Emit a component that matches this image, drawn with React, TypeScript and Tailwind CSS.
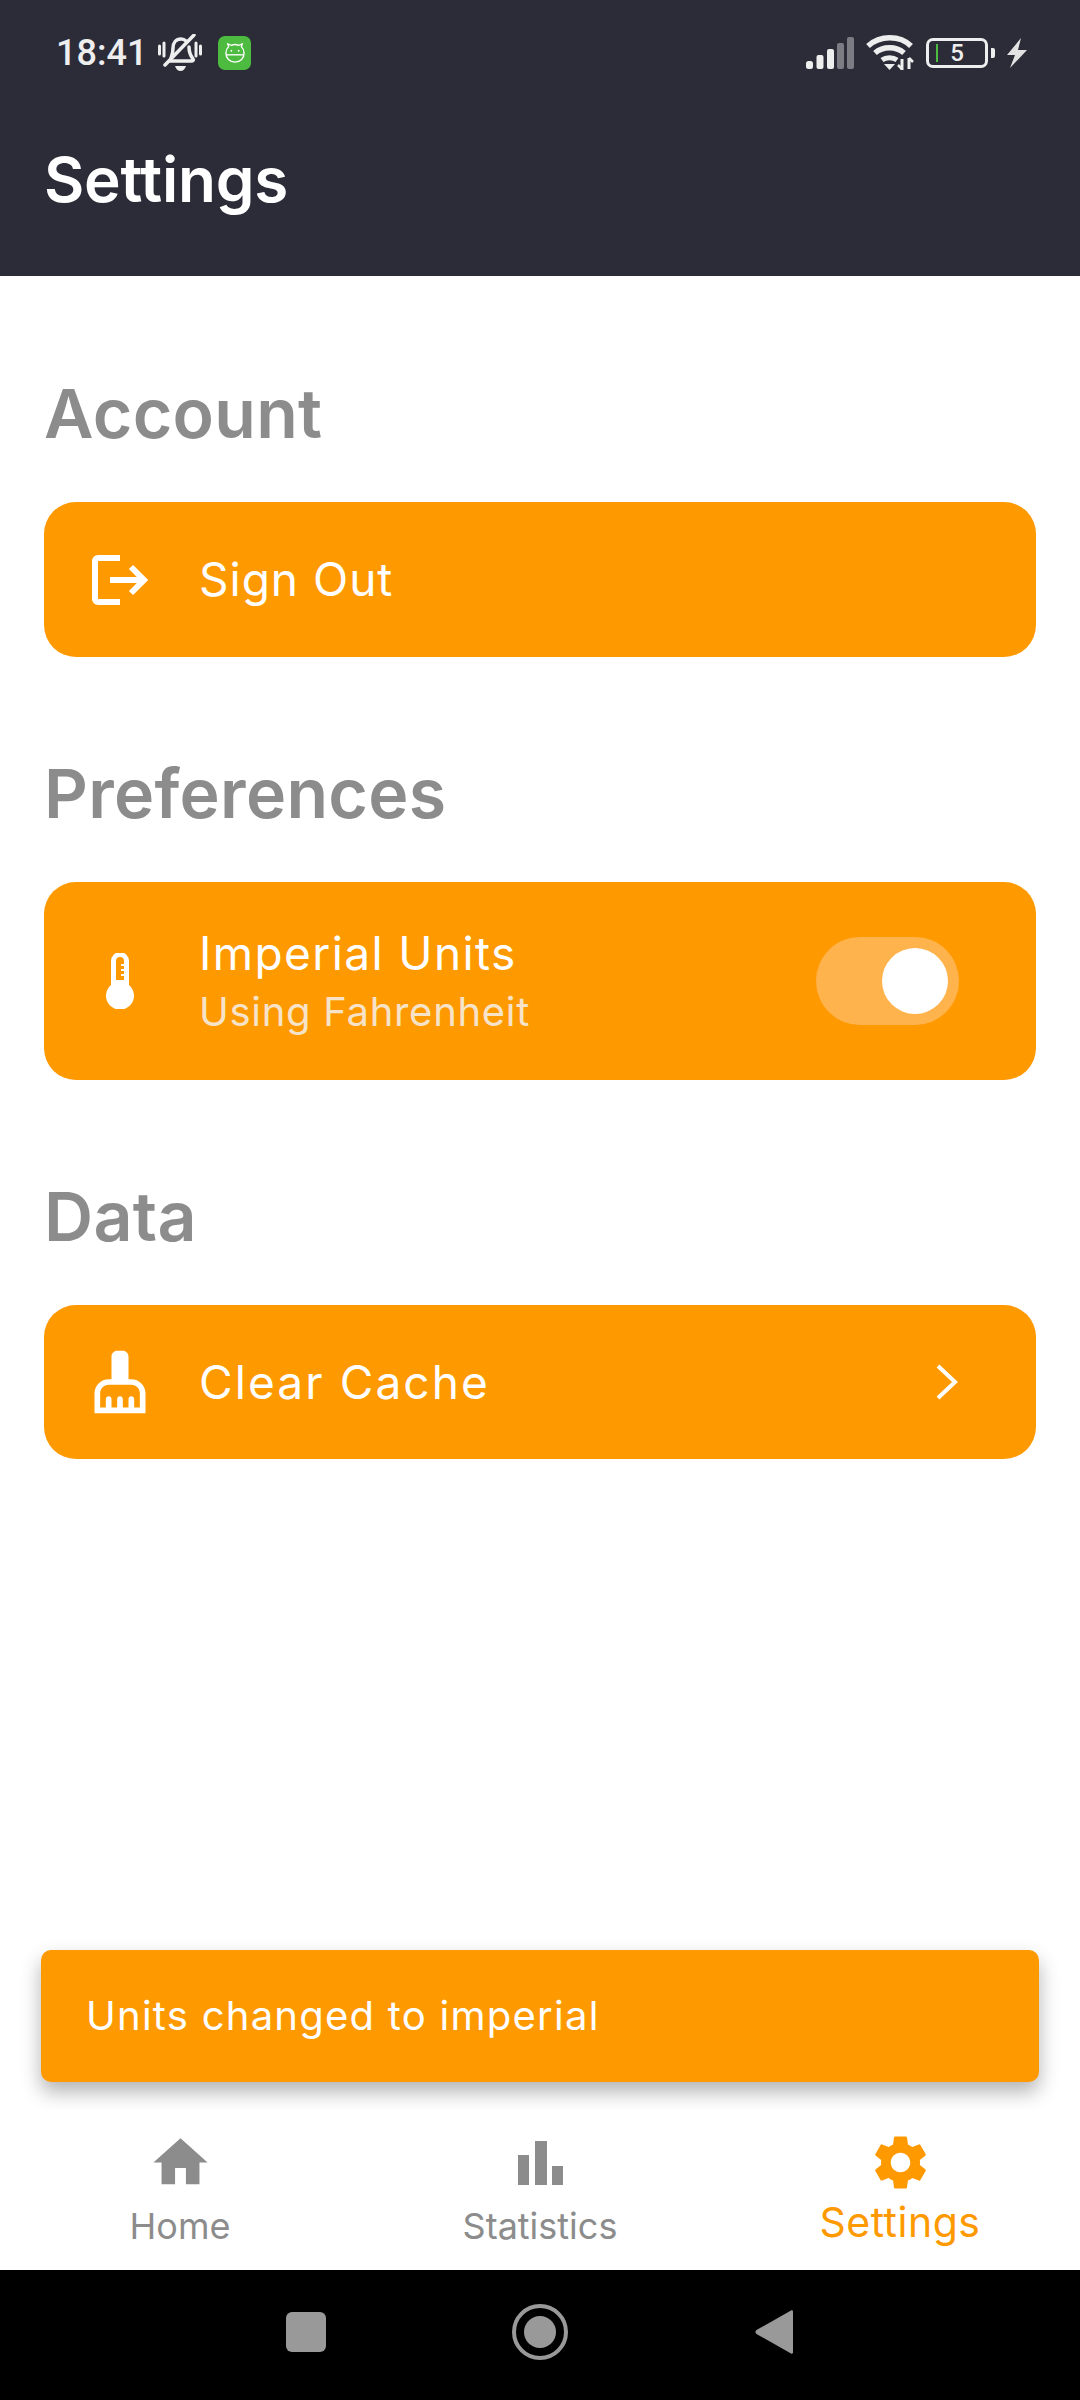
import { MdCleaningServices, MdHome, MdSettings } from 'react-icons/md';

const FONT = 'font-[Inter,"Noto_Sans",sans-serif]';

const MutedBell = () => (
  <svg width="46" height="38" viewBox="0 0 44 38" fill="none" stroke="#eeeeee" strokeLinecap="round">
    <path d="M1.500 12v8M6 9v13M38 9v13M42.500 12v8" strokeWidth="3" />
    <path d="M13 24c1-3 2-5 2-10 0-5 3-9 8-9 2 0 4 1 5 2M31 13c0 5 1 8 4 12 1 1 0 2-1 2H12" strokeWidth="3.500" />
    <path d="M36 1 7 31" strokeWidth="3.500" />
    <path d="M17 32h11c-1 3-3 5-5.500 5S18 35 17 32z" fill="#eeeeee" stroke="none" />
  </svg>
);

const AppBadge = () => (
  <div className="flex h-[34px] w-[33px] items-center justify-center rounded-[7px] bg-[#4dbb3f]">
    <svg width="20" height="22" viewBox="0 0 22 24" fill="none" stroke="#ffffff" strokeWidth="1.500">
      <path d="M4 5 3 2l4 1.500c2.500-1 5.500-1 8 0L19 2l-1 3c2 2 3 4 3 7 0 6-4 10-10 10S1 18 1 12c0-3 1-5 3-7z" />
      <path d="M1.500 14h19" />
      <circle cx="7" cy="9.500" r="1" fill="#ffffff" stroke="none" />
      <circle cx="15" cy="9.500" r="1" fill="#ffffff" stroke="none" />
    </svg>
  </div>
);

const SignalBars = () => (
  <svg width="48" height="32" viewBox="0 0 48 32">
    <rect x="0" y="24" width="7" height="8" rx="2.500" fill="#eeeeee" />
    <rect x="10.500" y="18" width="7" height="14" rx="2" fill="#eeeeee" />
    <rect x="21" y="12" width="7" height="20" rx="2" fill="#eeeeee" />
    <rect x="31" y="6" width="7" height="26" rx="2" fill="#7c7c85" />
    <rect x="41" y="0" width="7" height="32" rx="2" fill="#7c7c85" />
  </svg>
);

const WifiIcon = () => (
  <svg width="48" height="36" viewBox="0 0 48 36" fill="none" stroke="#eeeeee" strokeWidth="5.500">
    <path d="M2 11c12-11 32-11 43 0" />
    <path d="M9 18c8-7 21-7 29 0" />
    <path d="M16 25c4-3 11-3 15 0" strokeWidth="5" />
    <path d="M18 29h11l-5.500 6z" fill="#eeeeee" stroke="none" />
    <path d="M36 24v11M43 23v11" strokeWidth="3" />
    <path d="M32 30l4 4M47 27l-4-4" strokeWidth="2.500" />
  </svg>
);

const Bolt = () => (
  <svg width="20" height="30" viewBox="0 0 20 30">
    <path d="M14 0 0 17h8L3 30l17-18h-9z" fill="#e2e2e2" />
  </svg>
);

const SignOutIcon = () => (
  <svg width="56" height="50" viewBox="0 0 56 50" fill="none" stroke="#ffffff" strokeWidth="6">
    <path d="M28 3H6a3 3 0 0 0-3 3v38a3 3 0 0 0 3 3h22" />
    <path d="M18 25h34M39 12l13 13-13 13" />
  </svg>
);

const Thermometer = () => (
  <svg width="28" height="56" viewBox="0 0 28 56">
    <path
      fill="#ffffff"
      fillRule="evenodd"
      d="M5 8a9 9 0 0 1 18 0v24a14 14 0 1 1-18 0zM10 8v19h8v-4h-3v-2h3v-3h-3v-2h3v-3h-3v-2h3V8a4 4 0 0 0-8 0z"
    />
  </svg>
);

const Chevron = () => (
  <svg width="22" height="36" viewBox="0 0 22 36" fill="none" stroke="#ffffff" strokeWidth="4">
    <path d="m2 2 17 16L2 34" />
  </svg>
);

const StatsIcon = () => (
  <svg width="65" height="65" viewBox="0 0 65 65" fill="#8c8c8c">
    <rect x="10" y="25" width="11" height="30" />
    <rect x="27" y="11" width="12" height="44" />
    <rect x="44" y="36" width="11" height="19" />
  </svg>
);

const SectionTitle = ({ title, first }: { title: string; first?: boolean }) => (
  <h2
    className={`mb-[39px] flex h-[100px] items-center text-[68px] font-semibold tracking-[0.3px] text-[#8c8c8c] ${first ? '' : 'mt-[86px]'}`}
  >
    {title}
  </h2>
);

export default function App() {
  return (
    <div className={`flex h-[2400px] w-[1080px] flex-col overflow-hidden bg-white ${FONT}`}>
      <header className="h-[276px] shrink-0 bg-[#2c2c38] px-[44px]">
        <div className="flex h-[106px] items-center justify-between pl-[12px] pr-[9px] font-[Roboto,sans-serif]">
          <div className="flex items-center gap-[10px]">
            <span className="text-[36px] font-medium text-[#eeeeee]">18:41</span>
            <MutedBell />
            <span className="ml-[5px]">
              <AppBadge />
            </span>
          </div>
          <div className="flex items-center gap-[12px]">
            <SignalBars />
            <WifiIcon />
            <div className="flex items-center gap-[3px]">
              <div className="flex h-[30px] w-[62px] items-center justify-center rounded-[7px] border-[3px] border-[#eeeeee] text-[24px] font-medium leading-none text-[#eeeeee]">
                <span className="mr-[-2px] h-[18px] w-[2px] -translate-x-[14px] bg-[#4dbb3f]" />
                5
              </div>
              <span className="h-[10px] w-[4px] rounded-r-[2px] bg-[#eeeeee]" />
            </div>
            <Bolt />
          </div>
        </div>
        <h1 className="mt-[38px] text-[62px] font-semibold leading-[72px] tracking-[-0.2px] text-white">Settings</h1>
      </header>

      <main className="relative flex-1 px-[44px] pt-[87px]">
        <SectionTitle title="Account" first />
        <div className="flex h-[155px] items-center rounded-[32px] bg-[#ff9900] pl-[40px] text-white">
          <div className="flex w-[72px] justify-center">
            <SignOutIcon />
          </div>
          <span className="ml-[43px] text-[46px] tracking-[1px]">Sign Out</span>
        </div>

        <SectionTitle title="Preferences" />
        <div className="flex h-[198px] items-center rounded-[32px] bg-[#ff9900] pl-[40px] pr-[77px] text-white">
          <div className="flex w-[72px] justify-center">
            <Thermometer />
          </div>
          <div className="ml-[43px] flex-1">
            <p className="text-[46px] leading-[60px] tracking-[1.4px]">Imperial Units</p>
            <p className="mt-[1px] text-[40px] leading-[56px] tracking-[0.7px] text-[#f6e3c8]">Using Fahrenheit</p>
          </div>
          <div className="flex h-[88px] w-[143px] items-center justify-end rounded-full bg-[#ffb34d] pr-[11px]">
            <span className="h-[66px] w-[66px] rounded-full bg-white" />
          </div>
        </div>

        <SectionTitle title="Data" />
        <div className="flex h-[154px] items-center rounded-[32px] bg-[#ff9900] pl-[40px] pr-[78px] text-white">
          <div className="flex w-[72px] justify-center">
            <MdCleaningServices size={68} />
          </div>
          <span className="ml-[43px] flex-1 text-[46px] tracking-[2.1px]">Clear Cache</span>
          <Chevron />
        </div>

        <div className="absolute bottom-[28px] left-[41px] right-[41px] flex h-[132px] items-center rounded-[10px] bg-[#ff9900] pl-[45px] text-[40px] tracking-[1.25px] text-white shadow-[0_10px_20px_rgba(0,0,0,0.3)]">
          Units changed to imperial
        </div>
      </main>

      <nav className="relative flex h-[160px] shrink-0 bg-white pt-[20px]">
        <div className="flex flex-1 flex-col items-center text-[#8c8c8c]">
          <MdHome size={65} />
          <span className="mt-[8px] text-[36px] leading-[46px]">Home</span>
        </div>
        <div className="flex flex-1 flex-col items-center text-[#8c8c8c]">
          <StatsIcon />
          <span className="mt-[8px] text-[36px] leading-[46px]">Statistics</span>
        </div>
        <div className="flex flex-1 flex-col items-center text-[#ff9900]">
          <MdSettings size={65} />
          <span className="mt-[1px] text-[41px] leading-[52px] tracking-[0.5px]">Settings</span>
        </div>
      </nav>

      <div className="flex h-[130px] shrink-0 items-center justify-center bg-black pb-[6px]">
        <div className="flex w-[412px] justify-center">
          <span className="h-[40px] w-[40px] rounded-[6px] bg-[#999999]" />
        </div>
        <div className="flex h-[56px] w-[56px] items-center justify-center rounded-full border-[4px] border-[#999999]">
          <span className="h-[32px] w-[32px] rounded-full bg-[#999999]" />
        </div>
        <div className="flex w-[412px] justify-center">
          <svg width="38" height="46" viewBox="0 0 38 46">
            <path d="M36 1.500 1.500 21c-1.500 1-1.500 3 0 4L36 44.500c1 .5 2 0 2-1V2.500c0-1-1-1.500-2-1z" fill="#999999" />
          </svg>
        </div>
      </div>
    </div>
  );
}
